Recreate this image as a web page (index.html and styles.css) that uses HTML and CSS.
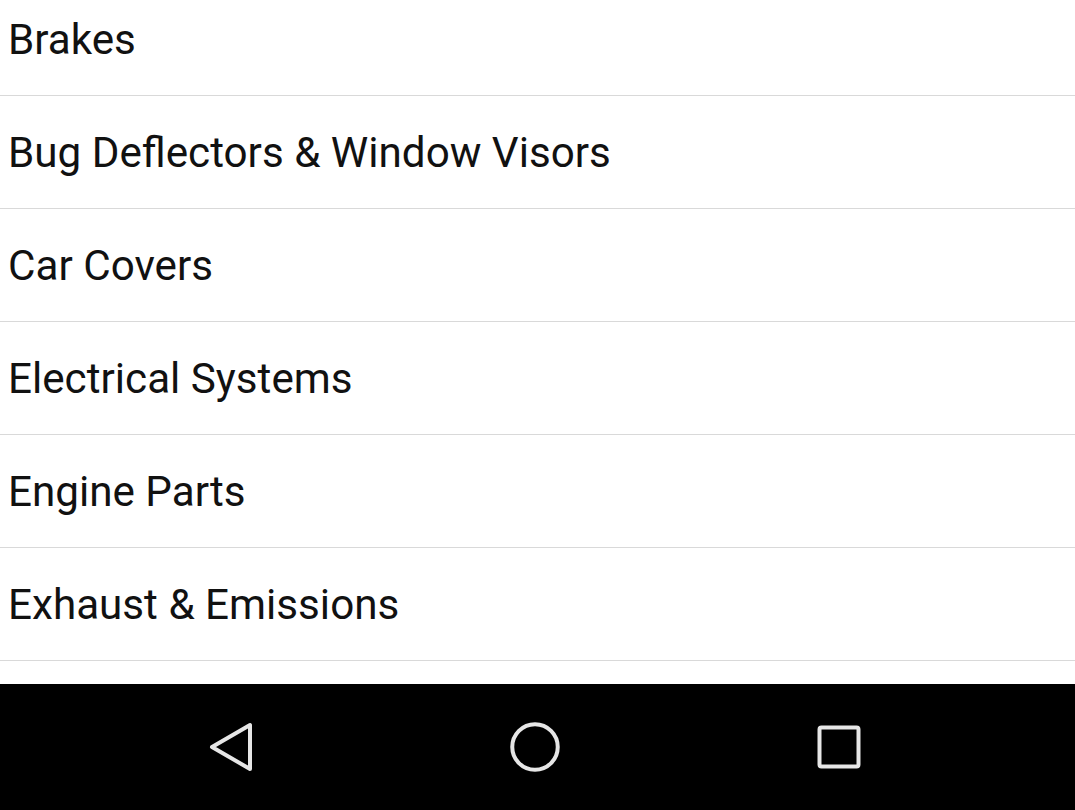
FILE: index.html
```html
<!DOCTYPE html>
<html lang="en">
<head>
<meta charset="utf-8">
<title>Categories</title>
<link rel="stylesheet" href="styles.css">
</head>
<body>
<div class="screen">
  <ul class="list">
    <li class="item">Brakes</li>
    <li class="item">Bug Deflectors &amp; Window Visors</li>
    <li class="item">Car Covers</li>
    <li class="item">Electrical Systems</li>
    <li class="item">Engine Parts</li>
    <li class="item">Exhaust &amp; Emissions</li>
  </ul>
  <nav class="navbar">
    <svg class="nav-icon" width="60" height="60" viewBox="0 0 60 60">
      <path d="M49 8 L49 52 L11 30 Z" fill="none" stroke="#e6e6e6" stroke-width="4" stroke-linejoin="round"/>
    </svg>
    <svg class="nav-icon" width="60" height="60" viewBox="0 0 60 60">
      <circle cx="30" cy="30" r="22.75" fill="none" stroke="#e6e6e6" stroke-width="4"/>
    </svg>
    <svg class="nav-icon" width="60" height="60" viewBox="0 0 60 60">
      <rect x="10.5" y="10.5" width="39" height="39" rx="2" fill="none" stroke="#e6e6e6" stroke-width="4"/>
    </svg>
  </nav>
</div>
</body>
</html>
```
FILE: styles.css
```css
html, body {
  margin: 0;
  padding: 0;
  background: #ffffff;
}
.screen {
  width: 1075px;
  height: 810px;
  display: flex;
  flex-direction: column;
  overflow: hidden;
}
.list {
  list-style: none;
  margin: -17px 0 0 0;
  padding: 0;
  flex: 1;
  overflow: hidden;
  min-height: 0;
}
.item {
  height: 112px;
  line-height: 114px;
  padding-left: 8px;
  border-bottom: 1px solid #d9d9d9;
  font-family: Roboto, "Noto Sans", sans-serif;
  font-size: 42.2px;
  color: #111111;
  white-space: nowrap;
  overflow: hidden;
}
.navbar {
  flex: 0 0 126px;
  background: #000000;
  display: flex;
  align-items: center;
  justify-content: center;
  gap: 244px;
  padding-right: 5px;
}
.nav-icon {
  display: block;
}
```
